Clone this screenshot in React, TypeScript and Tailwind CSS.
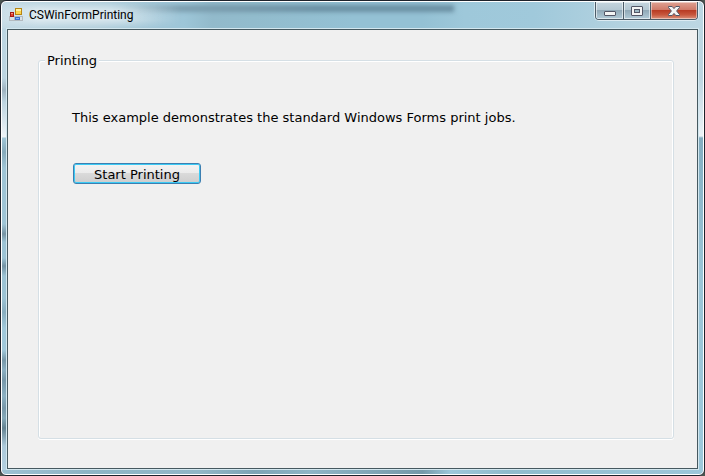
function FormIcon() {
  return (
    <svg width="14" height="14" viewBox="0 0 14 14" aria-hidden="true" shapeRendering="crispEdges">
      <path d="M.5 8.500h5v4h-5zM5.500 8.500h8v4h-8z" fill="#d9dfe3" stroke="#b3babf" />
      <rect x="6.500" y=".5" width="6" height="6" fill="#fbd34c" stroke="#b88512" />
      <path d="M7 1h5v2H7z" fill="#fff0a0" />
      <rect x="1.500" y="4.500" width="3" height="4" fill="#e4472f" stroke="#a51a16" />
      <path d="M2 5h2v1H2z" fill="#f3977d" />
      <rect x="6.500" y="9.500" width="4" height="2" fill="#82b5f5" stroke="#3b6fd0" />
    </svg>
  );
}

function MinimizeIcon() {
  return (
    <svg width="14" height="14" viewBox="0 0 14 14" aria-hidden="true">
      <rect x="1.500" y="7.500" width="11" height="4" rx=".5" fill="#f4f4f4" stroke="#535666" />
    </svg>
  );
}

function MaximizeIcon() {
  return (
    <svg width="14" height="14" viewBox="0 0 14 14" aria-hidden="true">
      <rect x="1.500" y="2.500" width="11" height="9" rx=".5" fill="#f4f4f4" stroke="#535666" />
      <rect x="4.500" y="5.500" width="5" height="3" fill="#9db8c4" stroke="#535666" />
    </svg>
  );
}

function CloseIcon() {
  return (
    <svg width="14" height="14" viewBox="0 0 14 14" aria-hidden="true">
      <path
        d="M1.500 2.500h3.700L7 4.600l1.800-2.100h3.700v1L9.600 7l2.900 3.500v1H8.800L7 9.400l-1.800 2.100H1.500v-1L4.400 7 1.500 3.500z"
        fill="#f4f4f4"
        stroke="#535666"
      />
    </svg>
  );
}

function TitleBar() {
  return (
    <header className="relative flex h-[26px] shrink-0 items-start justify-between overflow-hidden bg-[linear-gradient(90deg,#c3dae5_0%,#b4d0dd_14%,#9fc6d8_23%,#9dc6d8_26%,#92bacb_30%,#92bccd_36%,#94c1d4_50%,#94c1d4_60%,#9ec8da_66%,#a0c9db_76%,#b5d3e0_90%,#bcd7e3_100%)]">
      <div className="absolute top-[3px] left-[110px] h-[7px] w-[342px] bg-[linear-gradient(90deg,transparent,#7d9fb0_20%,#6b90a3_60%,#6b90a3)] blur-[2px]" />
      <div className="absolute top-0 left-0 h-[26px] w-[180px] bg-[linear-gradient(90deg,#ffffff20,#ffffff70_20%,#ffffff70_65%,transparent)] mask-[linear-gradient(transparent,#000_30%,#000_70%,transparent)]" />
      <div className="relative flex h-full items-center gap-1.5 pl-[7px]">
        <FormIcon />
        <h1 className="font-['Roboto','Open_Sans',sans-serif] text-[12px] leading-4 text-black">CSWinFormPrinting</h1>
      </div>
      <div className="relative mr-[5px] flex h-[18px] divide-x divide-[#4c5c68] overflow-hidden rounded-b-[4px] border border-t-0 border-[#4c5c68] shadow-[0_0_0_1px_#dcebf2]">
        <button
          type="button"
          aria-label="Minimize"
          className="flex w-7 items-center justify-center bg-[linear-gradient(#c5d5de_0%,#b4c7d2_48%,#91a9b7_50%,#b2cbd8_100%)] shadow-[inset_0_0_0_1px_#ffffff90]"
        >
          <MinimizeIcon />
        </button>
        <button
          type="button"
          aria-label="Maximize"
          className="flex w-[27px] items-center justify-center bg-[linear-gradient(#c5d5de_0%,#b4c7d2_48%,#91a9b7_50%,#b2cbd8_100%)] shadow-[inset_0_0_0_1px_#ffffff90]"
        >
          <MaximizeIcon />
        </button>
        <button
          type="button"
          aria-label="Close"
          className="flex w-[46px] items-center justify-center bg-[linear-gradient(#dfa293_0%,#cf7866_48%,#b93c24_50%,#c7573d_75%,#dc927c_100%)] shadow-[inset_0_0_0_1px_#ffffff70]"
        >
          <CloseIcon />
        </button>
      </div>
    </header>
  );
}

export default function App() {
  return (
    <div className="flex min-h-screen bg-[#4b5550]">
      <div className="flex flex-1 flex-col overflow-hidden rounded-[6px] border border-[#1d222b] bg-white p-px">
        <div className="flex flex-1 flex-col overflow-hidden rounded-[4px]">
          <TitleBar />
          <div className="flex flex-1">
            <div className="w-1 bg-[linear-gradient(#bdd6e2_0px,#bdd5e1_50px,#9eb2bf_62px,#bdd4e0_74px,#edf3f7_108px,#edf3f7_109px,#a0c6d7_110px,#86aabb_124px,#9fc5d6_140px,#9fc5d6_196px,#7693a3_206px,#9cc3d4_214px,#9cc3d4_230px,#7493a4_238px,#9cc3d4_248px,#9cc3d4_270px,#88adbf_284px,#a0c8da_300px,#a0c8da_322px,#7798a9_332px,#8bb0c3_342px,#7798aa_352px,#8bb0c2_368px,#7898aa_380px,#85a9b9_390px,#648392_400px,#acc9da_418px,#b3cfdf_100%)]" />
            <div className="flex flex-1 border border-[#d3e7ef]">
              <main className="flex flex-1 border border-[#465960] bg-[#f0f0f0] pt-[21px] pr-[23px] pb-[29px] pl-[30px] font-['DejaVu_Sans',Verdana,sans-serif] text-[13px] leading-4 text-black">
                <fieldset className="flex-1 rounded-[3px] border border-[#d5dfe5] pt-[41px] pr-4 pb-4 pl-[33px] shadow-[inset_1px_1px_0_#fff,inset_-1px_0_0_#fff,0_1px_0_#fff]">
                  <legend className="-ml-[27px] bg-[#f0f0f0] px-0.5 pt-0.5">Printing</legend>
                  <p>This example demonstrates the standard Windows Forms print jobs.</p>
                  <button
                    type="button"
                    className="mt-[37px] ml-px flex h-[21px] w-32 items-center justify-center overflow-hidden rounded-[3px] border border-[#3c7fb1] bg-[linear-gradient(#f3f3f3_0%,#ebebeb_48%,#dadada_50%,#cdcdcd_100%)] pt-0.5 shadow-[inset_0_0_0_1px_#3bcaf4]"
                  >
                    Start Printing
                  </button>
                </fieldset>
              </main>
            </div>
            <div className="w-1 bg-[linear-gradient(#bdd7e3_0px,#bdd5e1_50px,#edf3f7_108px,#84adc0_110px,#8bb5c8_150px,#9bc5d7_250px,#9dc8db_100%)]" />
          </div>
          <div className="h-1 shrink-0 bg-[linear-gradient(90deg,#9cc1d3_0%,#8eb5c5_12%,#90b7c7_28%,#7ea4b5_36%,#8eb5c6_44%,#7599a9_60%,#9dc7da_64%,#8fbccd_72%,#9dc7da_100%)]" />
        </div>
      </div>
    </div>
  );
}
